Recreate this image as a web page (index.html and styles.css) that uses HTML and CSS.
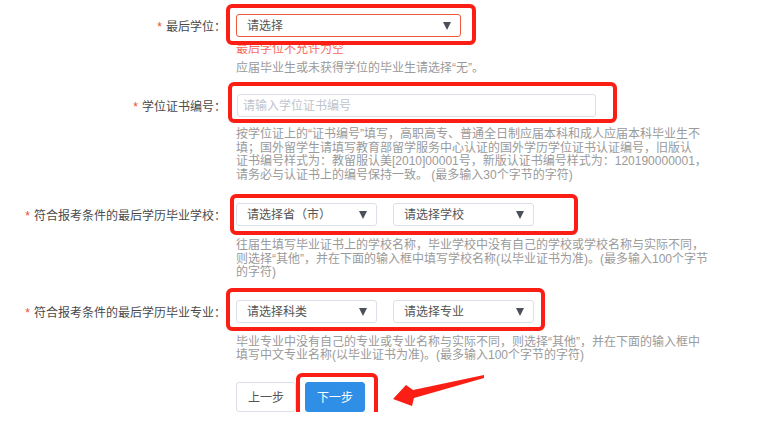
FILE: index.html
```html
<!DOCTYPE html>
<html lang="zh-CN">
<head>
    <meta charset="UTF-8">
    <meta name="viewport" content="width=device-width, initial-scale=1.0">
    <title>学位信息</title>
    <link rel="stylesheet" href="styles.css">
</head>
<body>

<div class="form">
    <div class="form-item item-degree">
        <div class="item-label"><span class="req">*</span>最后学位：</div>
        <div class="item-content">
            <div class="select select-wide is-error"><span>请选择</span><i class="caret"></i></div>
            <div class="error">最后学位不允许为空</div>
            <div class="tip">应届毕业生或未获得学位的毕业生请选择“无”。</div>
        </div>
    </div>

    <div class="form-item item-cert">
        <div class="item-label"><span class="req">*</span>学位证书编号：</div>
        <div class="item-content">
            <input class="input" type="text" placeholder="请输入学位证书编号">
            <div class="tip">按学位证上的“证书编号”填写，高职高专、普通全日制应届本科和成人应届本科毕业生不<br>填；国外留学生请填写教育部留学服务中心认证的国外学历学位证书认证编号，旧版认<br>证书编号样式为：教留服认美[2010]00001号，新版认证书编号样式为：120190000001，<br>请务必与认证书上的编号保持一致。 (最多输入30个字节的字符)</div>
        </div>
    </div>

    <div class="form-item item-school">
        <div class="item-label"><span class="req">*</span>符合报考条件的最后学历毕业学校：</div>
        <div class="item-content">
            <div class="select-group">
                <div class="select"><span>请选择省（市）</span><i class="caret"></i></div>
                <div class="select"><span>请选择学校</span><i class="caret"></i></div>
            </div>
            <div class="tip">往届生填写毕业证书上的学校名称，毕业学校中没有自己的学校或学校名称与实际不同，<br>则选择“其他”，并在下面的输入框中填写学校名称(以毕业证书为准)。(最多输入100个字节<br>的字符)</div>
        </div>
    </div>

    <div class="form-item item-major">
        <div class="item-label"><span class="req">*</span>符合报考条件的最后学历毕业专业：</div>
        <div class="item-content">
            <div class="select-group">
                <div class="select"><span>请选择科类</span><i class="caret"></i></div>
                <div class="select"><span>请选择专业</span><i class="caret"></i></div>
            </div>
            <div class="tip">毕业专业中没有自己的专业或专业名称与实际不同，则选择“其他”，并在下面的输入框中<br>填写中文专业名称(以毕业证书为准)。(最多输入100个字节的字符)</div>
        </div>
    </div>

    <div class="form-actions">
        <button class="btn">上一步</button>
        <button class="btn btn-primary">下一步</button>
    </div>
</div>

<!-- annotation marks drawn over the form -->
<div class="mark mark-degree"></div>
<div class="mark mark-cert"></div>
<div class="mark mark-school"></div>
<div class="mark mark-major"></div>
<div class="mark mark-next"></div>
<svg class="arrow" width="100" height="42" viewBox="0 0 100 42">
    <polygon points="5,29 18,15 25,20 96,5 96,8 26,28 24,36" fill="#fb1e14"/>
</svg>

</body>
</html>
```

FILE: styles.css
```css
body {
    margin: 0;
    position: relative;
    background: #fff;
    font-family: "Liberation Sans", "Noto Sans CJK SC", sans-serif;
    font-size: 12px;
    color: #555;
}
.form {
    padding-top: 14px;
}
.form-item {
    display: flex;
    align-items: flex-start;
}
.item-label {
    width: 226px;
    flex-shrink: 0;
    padding-top: 2px;
    text-align: right;
    line-height: 23px;
    color: #4a4a4a;
    white-space: nowrap;
}
.req {
    color: #f04a2a;
    margin-right: 4px;
}
.item-content {
    margin-left: 10px;
    width: 520px;
}
.item-degree {
    margin-bottom: 19px;
}
.item-cert {
    margin-bottom: 21px;
}
.item-school {
    margin-bottom: 20px;
}
.item-major {
    margin-bottom: 19px;
}
.select {
    position: relative;
    box-sizing: border-box;
    width: 141px;
    height: 23px;
    padding: 2px 0 0 10px;
    line-height: 19px;
    border: 1px solid #dcdfe6;
    border-radius: 3px;
    color: #555;
    background: #fff;
}
.select-wide {
    width: 225px;
}
.select.is-error {
    border-color: #ef5a3a;
}
.caret {
    position: absolute;
    right: 9px;
    top: 7px;
    width: 0;
    height: 0;
    border-left: 4px solid transparent;
    border-right: 4px solid transparent;
    border-top: 8px solid #4a4f5a;
}
.select-group {
    display: flex;
    gap: 16px;
}
.input {
    display: block;
    box-sizing: border-box;
    width: 359px;
    height: 23px;
    margin: 0 0 0 1px;
    padding: 1px 5px 0;
    border: 1px solid #dcdfe6;
    border-radius: 3px;
    font-family: inherit;
    font-size: 12px;
    color: #555;
    outline: none;
}
.input::placeholder {
    color: #c0c4cc;
}
.error {
    margin-top: 5px;
    line-height: 14px;
    color: #f56c5c;
}
.tip {
    margin-top: 13px;
    line-height: 13.5px;
    color: #9a9a9a;
    white-space: nowrap;
}
.item-degree .tip {
    margin-top: 5px;
    line-height: 14px;
}
.item-cert .tip {
    margin-top: 11px;
}
.form-actions {
    display: flex;
    gap: 9px;
    padding-left: 236px;
}
.btn {
    width: 60px;
    height: 30px;
    padding: 0;
    font-family: inherit;
    font-size: 12px;
    color: #555;
    background: #fff;
    border: 1px solid #dcdfe6;
    border-radius: 3px;
    cursor: pointer;
}
.btn-primary {
    color: #fff;
    background: #2f8fe6;
    border-color: #2f8fe6;
}
.mark {
    position: absolute;
    box-sizing: border-box;
    border: 4px solid #fb1e14;
    border-radius: 6px;
}
.mark-degree {
    left: 226px;
    top: 4px;
    width: 250px;
    height: 41px;
}
.mark-cert {
    left: 228px;
    top: 82px;
    width: 389px;
    height: 41px;
}
.mark-school {
    left: 230px;
    top: 194px;
    width: 348px;
    height: 41px;
}
.mark-major {
    left: 226px;
    top: 288px;
    width: 319px;
    height: 43px;
}
.mark-next {
    left: 296px;
    top: 373px;
    width: 82px;
    height: 44px;
}
.arrow {
    position: absolute;
    left: 388px;
    top: 370px;
}
```
